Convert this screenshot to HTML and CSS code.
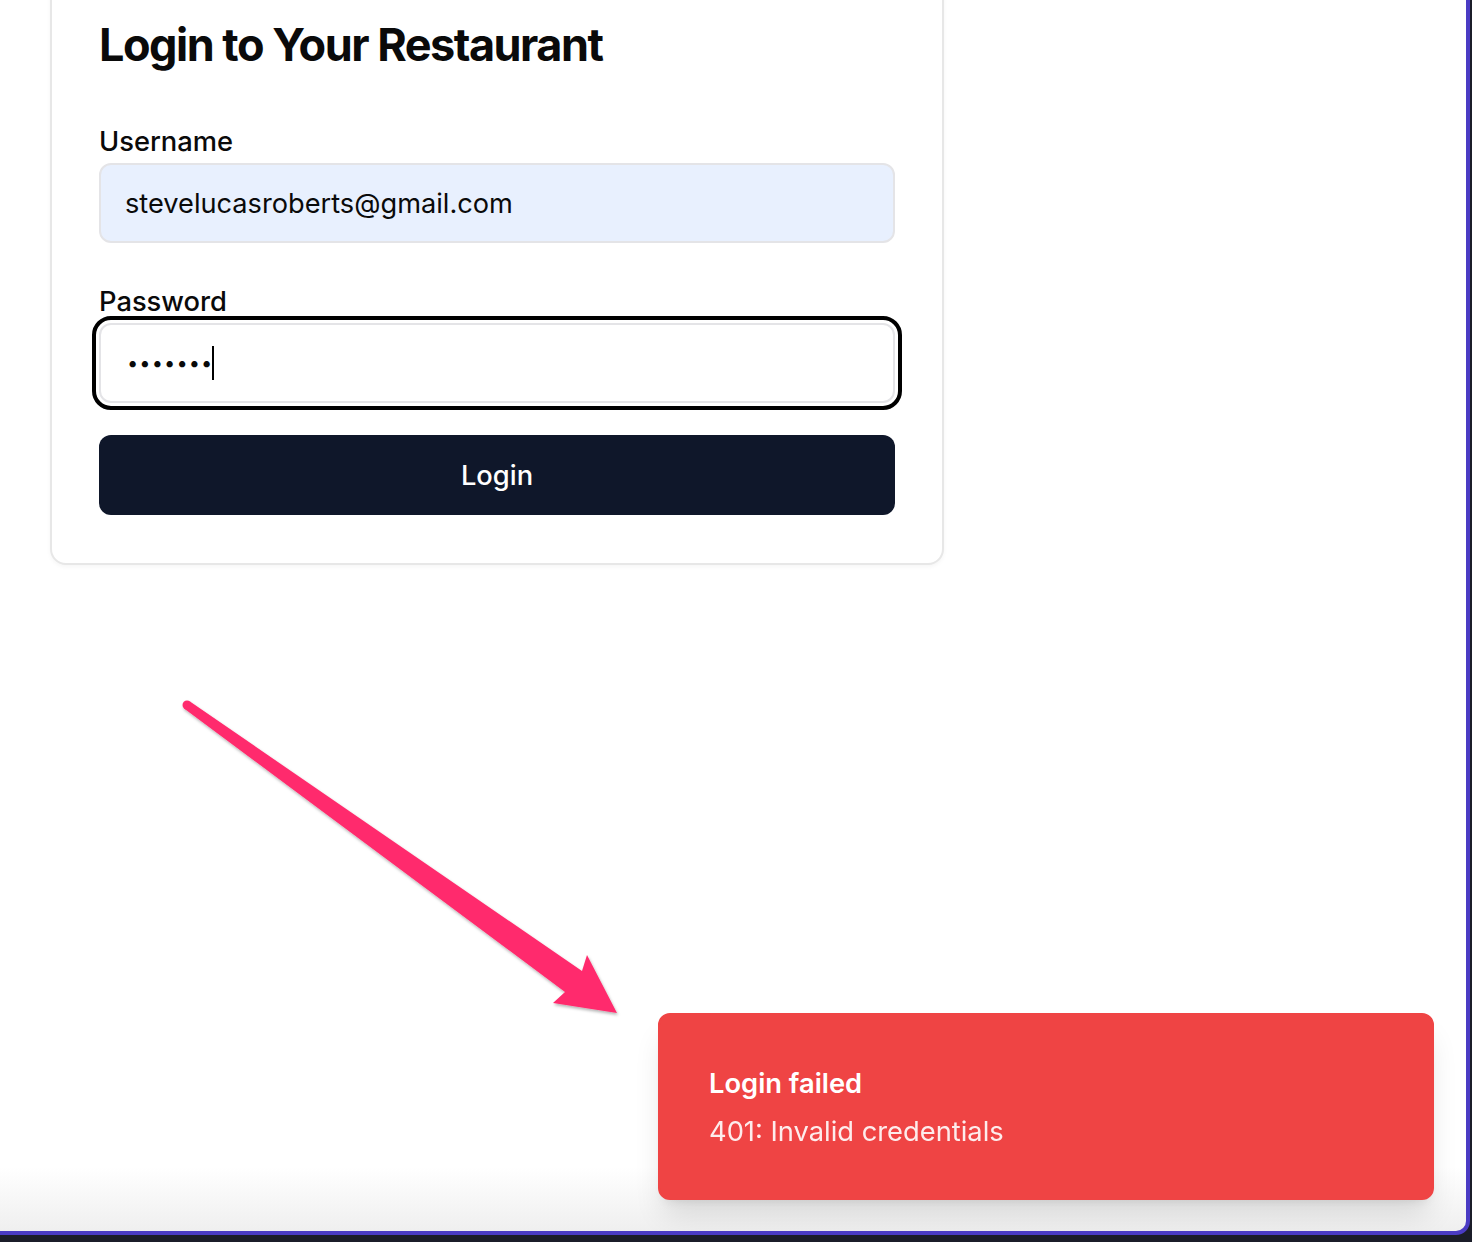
FILE: index.html
```html
<!DOCTYPE html>
<html lang="en">
<head>
<meta charset="utf-8">
<title>Login</title>
<link rel="stylesheet" href="styles.css">
</head>
<body>
<div class="frame">
  <main class="page">
    <section class="card">
      <h1 class="title">Login to Your Restaurant</h1>
      <form class="form">
        <div class="group">
          <label class="label" for="username">Username</label>
          <input id="username" class="input autofill" type="text" value="stevelucasroberts@gmail.com">
        </div>
        <div class="group">
          <label class="label">Password</label>
          <div class="input focused"><span class="dots">•••••••</span><span class="caret"></span></div>
        </div>
        <button type="button" class="btn">Login</button>
      </form>
    </section>
  </main>

  <svg class="arrow" width="1466" height="1231" viewBox="0 0 1466 1231" aria-hidden="true">
    <defs>
      <filter id="shadow" x="-10%" y="-10%" width="120%" height="120%">
        <feDropShadow dx="1" dy="2" stdDeviation="1.5" flood-color="#000" flood-opacity="0.3"/>
      </filter>
    </defs>
    <g filter="url(#shadow)" fill="#ff2c6d">
      <circle cx="187" cy="705" r="4.5"/>
      <polygon points="189.6,701.3 582,971 587,955 617,1013 553,1003 565,992 184.4,708.7"/>
    </g>
  </svg>

  <div class="toast">
    <div class="toast-title">Login failed</div>
    <div class="toast-desc">401: Invalid credentials</div>
  </div>
</div>
</body>
</html>
```

FILE: styles.css
```css
* { box-sizing: border-box; }

html, body {
  margin: 0;
  padding: 0;
}

body {
  background: #1b1d29;
  font-family: Inter, "Noto Sans", "Liberation Sans", sans-serif;
  color: #0a0a0a;
  overflow: hidden;
}

.frame {
  position: relative;
  width: 1470px;
  height: 1235px;
  border-right: 4px solid #4a3bc4;
  border-bottom: 4px solid #4a3bc4;
  border-bottom-right-radius: 14px;
  background: linear-gradient(to bottom, #ffffff 0, #ffffff calc(100% - 64px), #efefef 100%);
  overflow: hidden;
}

.page {
  padding-left: 50px;
}

.card {
  width: 894px;
  margin-top: -32px;
  border: 2px solid #e7e7e7;
  border-radius: 16px;
  padding: 47px 47px 48px;
  background: #fff;
  box-shadow: 0 2px 4px rgba(0, 0, 0, 0.04);
}

.title {
  margin: 0 0 49px;
  font-size: 45px;
  line-height: 56px;
  font-weight: 700;
  letter-spacing: -1.5px;
  color: #0a0a0a;
}

.form {
  display: flex;
  flex-direction: column;
}

.group + .group {
  margin-top: 39px;
}

.label {
  display: block;
  font-size: 27.3px;
  line-height: 40px;
  font-weight: 500;
  margin-bottom: 1px;
}

.input {
  display: flex;
  align-items: center;
  width: 100%;
  height: 80px;
  border: 2px solid #e4e4e7;
  border-radius: 12px;
  padding: 0 24px;
  font-family: inherit;
  font-size: 27.2px;
  color: #0a0a0a;
  background: #fff;
  outline: none;
}

.autofill {
  background: #e8f0fe;
}

.focused {
  outline: 4px solid #000;
  outline-offset: 3px;
}

.dots {
  font-size: 20px;
  letter-spacing: 1.1px;
  line-height: 1;
  padding-left: 2px;
}

.caret {
  display: inline-block;
  width: 2px;
  height: 34px;
  background: #000;
  margin-left: -1px;
}

.btn {
  margin-top: 32px;
  height: 80px;
  width: 100%;
  border: 0;
  border-radius: 12px;
  background: #0f172a;
  color: #fff;
  font-family: inherit;
  font-size: 27.3px;
  font-weight: 500;
}

.arrow {
  position: absolute;
  left: 0;
  top: 0;
  pointer-events: none;
}

.toast {
  position: absolute;
  right: 32px;
  bottom: 31px;
  width: 776px;
  border: 2px solid #ef4444;
  border-radius: 12px;
  background: #ef4444;
  color: #fff;
  padding: 49px 62px 46px 49px;
  box-shadow: 0 20px 30px -6px rgba(0, 0, 0, 0.12), 0 8px 12px -8px rgba(0, 0, 0, 0.12);
}

.toast-title {
  font-size: 27.3px;
  line-height: 40px;
  font-weight: 600;
}

.toast-desc {
  margin-top: 8px;
  font-size: 27.3px;
  line-height: 40px;
  opacity: 0.9;
}
```
